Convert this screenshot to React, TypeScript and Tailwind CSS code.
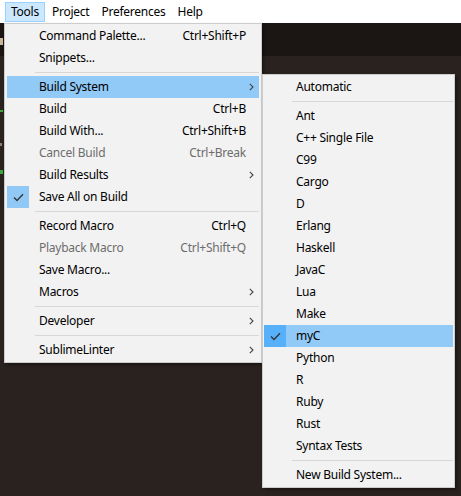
import React from "react";

type Item =
  | { sep: true }
  | {
      sep?: false;
      label: string;
      shortcut?: string;
      arrow?: boolean;
      disabled?: boolean;
      checked?: boolean;
      hover?: boolean;
    };

const mainItems: Item[] = [
  { label: "Command Palette...", shortcut: "Ctrl+Shift+P" },
  { label: "Snippets..." },
  { sep: true },
  { label: "Build System", arrow: true, hover: true },
  { label: "Build", shortcut: "Ctrl+B" },
  { label: "Build With...", shortcut: "Ctrl+Shift+B" },
  { label: "Cancel Build", shortcut: "Ctrl+Break", disabled: true },
  { label: "Build Results", arrow: true },
  { label: "Save All on Build", checked: true },
  { sep: true },
  { label: "Record Macro", shortcut: "Ctrl+Q" },
  { label: "Playback Macro", shortcut: "Ctrl+Shift+Q", disabled: true },
  { label: "Save Macro..." },
  { label: "Macros", arrow: true },
  { sep: true },
  { label: "Developer", arrow: true },
  { sep: true },
  { label: "SublimeLinter", arrow: true },
];

const subItems: Item[] = [
  { label: "Automatic" },
  { sep: true },
  { label: "Ant" },
  { label: "C++ Single File" },
  { label: "C99" },
  { label: "Cargo" },
  { label: "D" },
  { label: "Erlang" },
  { label: "Haskell" },
  { label: "JavaC" },
  { label: "Lua" },
  { label: "Make" },
  { label: "myC", checked: true, hover: true },
  { label: "Python" },
  { label: "R" },
  { label: "Ruby" },
  { label: "Rust" },
  { label: "Syntax Tests" },
  { sep: true },
  { label: "New Build System..." },
];

function Check() {
  return (
    <svg width="11" height="9" viewBox="0 0 11 9" fill="none">
      <path d="M1 4.5 L4 7.5 L10 1.2" stroke="#333333" strokeWidth="1.3" />
    </svg>
  );
}

function Arrow() {
  return (
    <svg width="5" height="8" viewBox="0 0 5 8" fill="none">
      <path d="M0.8 0.8 L4 4 L0.8 7.2" stroke="#444444" strokeWidth="1.1" />
    </svg>
  );
}

function MenuRows({ items }: { items: Item[] }) {
  return (
    <>
      {items.map((it, i) => {
        if (it.sep) {
          return (
            <div key={i} className="h-[7px] flex items-center pl-[28px]">
              <div className="h-px w-full bg-[#d7d7d7]" />
            </div>
          );
        }
        const check = it.checked ? (
          <div
            className={
              "w-[22px] h-[22px] flex items-center justify-center " +
              (it.hover ? "bg-[#56b0fa]" : "bg-[#90c8f6]")
            }
          >
            <Check />
          </div>
        ) : (
          <div className="w-[22px] h-[22px]" />
        );
        return (
          <div
            key={i}
            className={
              "h-[22px] flex items-center " +
              (it.hover ? "bg-[#91c9f7] " : "") +
              (it.disabled ? "text-[#6d6d6d]" : "text-black")
            }
          >
            {check}
            <div className="flex-1 ml-[10px] whitespace-nowrap">{it.label}</div>
            {it.shortcut && <div className="whitespace-nowrap">{it.shortcut}</div>}
            <div className="w-[13px] h-[22px] flex items-center pl-[3px]">
              {it.arrow && <Arrow />}
            </div>
          </div>
        );
      })}
    </>
  );
}

export default function App() {
  return (
    <div
      className="relative w-[461px] h-[496px] overflow-hidden bg-[#2a221e] text-[12px] leading-none tracking-[-0.25px]"
      style={{ fontFamily: '"Noto Sans", "Open Sans", sans-serif' }}
    >
      <div className="h-[23px] bg-white flex items-center text-black">
        <div className="ml-[5px] h-[20px] px-[5px] flex items-center bg-[#cce8ff] border border-[#99d1ff]">
          Tools
        </div>
        <div className="ml-[1px] h-[20px] px-[6px] flex items-center">Project</div>
        <div className="h-[20px] px-[6px] flex items-center">Preferences</div>
        <div className="h-[20px] px-[6px] flex items-center">Help</div>
      </div>
      <div className="h-[33px] bg-[#1b1613]" />

      {/* faint editor bits at left edge */}
      <div className="absolute left-0 top-[38px] w-[3px] h-[7px] bg-[#c9b79c]" />
      <div className="absolute left-0 top-[110px] w-[3px] h-[2px] bg-[#3aa83a]" />
      <div className="absolute left-0 top-[143px] w-[2px] h-[3px] bg-[#8a8070]" />
      <div className="absolute left-0 top-[170px] w-[3px] h-[4px] bg-[#3aa83a]" />

      <div className="absolute left-[4px] top-[23px] w-[258px] bg-[#f2f2f2] border border-[#cccccc] px-[2px] py-[1px] shadow-[2px_2px_3px_rgba(0,0,0,0.35)]">
        <MenuRows items={mainItems} />
      </div>

      <div className="absolute left-[262px] top-[74px] w-[193px] bg-[#f2f2f2] border border-[#cccccc] p-[1px] shadow-[2px_2px_3px_rgba(0,0,0,0.35)]">
        <MenuRows items={subItems} />
      </div>
    </div>
  );
}
